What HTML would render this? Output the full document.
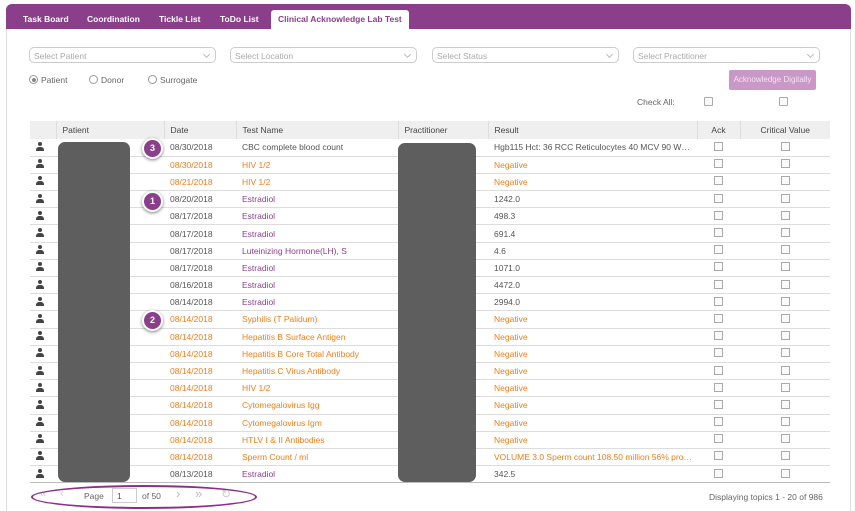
<!DOCTYPE html>
<html><head><meta charset="utf-8"><style>
*{box-sizing:border-box;margin:0;padding:0}
html,body{width:855px;height:511px;overflow:hidden}
body{background:#fff;font-family:"Liberation Sans",sans-serif;font-size:8.5px;color:#555;position:relative}
.panel{position:absolute;left:6px;top:4px;width:845px;height:507px;border:1px solid #ddd;border-bottom:none;border-radius:6px 6px 0 0}
.bar{position:absolute;left:6px;top:4px;width:845px;height:25px;background:#8b3f8a;border-radius:6px 6px 0 0}
.tab{position:absolute;top:14px;font-weight:bold;color:#fff;font-size:8.5px}
.tab.act{top:10px;height:19px;background:#fff;color:#8b3f8a;padding:4px 7px 0;border-radius:3px 3px 0 0}
.sel{position:absolute;top:47px;height:16px;border:1px solid #ccc;border-radius:5px;color:#aaa;padding:3px 4px;font-size:8.5px}
.sel:after{content:"";position:absolute;right:6px;top:4px;width:4px;height:4px;border-right:1px solid #bbb;border-bottom:1px solid #bbb;transform:rotate(45deg)}
.rad{position:absolute;top:75px;font-size:8.5px;color:#666}
.rad i{display:inline-block;width:9px;height:9px;border:1px solid #999;border-radius:50%;vertical-align:-1px;margin-right:3px;position:relative}
.rad i.on:after{content:"";position:absolute;left:1.5px;top:1.5px;width:4px;height:4px;border-radius:50%;background:#888}
.cb{position:absolute;width:9px;height:9px;border:1px solid #aaa;border-radius:1px;background:#fafafa}
table{position:absolute;left:30px;top:121px;width:800px;border-collapse:collapse;table-layout:fixed}
th{background:#efefef;font-weight:normal;text-align:left;height:18px;padding-left:6px;border-left:1px solid #ddd;color:#444}
th:first-child{border-left:none}
td{height:17.2px;padding-left:6px;border-bottom:1px solid #ddd;white-space:nowrap;overflow:hidden}
tr:last-child td{border-bottom:1px solid #bbb}
.o{color:#f07f1a}.p{color:#8b3f8a}
.c{text-align:center;padding-left:0}
.c span{display:inline-block;width:9px;height:9px;border:1px solid #aaa;background:#fafafa}
.u{display:inline-block;width:8px;height:9px;position:relative}
.u:before{content:"";position:absolute;left:2px;top:0;width:4px;height:4px;border-radius:50%;background:#444}
.u:after{content:"";position:absolute;left:0;top:5px;width:8px;height:4px;border-radius:3px 3px 0 0;background:#444}
.blob{position:absolute;background:#5e5e5e;border-radius:7px}
.badge{position:absolute;width:21px;height:21px;border-radius:50%;background:#8b3f8a;border:2px solid #fff;box-shadow:0 1px 3px rgba(0,0,0,.5);color:#fff;font-weight:bold;font-size:9px;text-align:center;line-height:17px}
.pg{position:absolute;top:491px;font-size:8.5px;color:#666}
</style></head><body>
<div class="panel"></div>
<div class="bar"></div>
<div class="tab" style="left:23px">Task Board</div>
<div class="tab" style="left:87px">Coordination</div>
<div class="tab" style="left:159px">Tickle List</div>
<div class="tab" style="left:220px">ToDo List</div>
<div class="tab act" style="left:271px">Clinical Acknowledge Lab Test</div>
<div class="sel" style="left:29px;width:187px">Select Patient</div>
<div class="sel" style="left:230px;width:187px">Select Location</div>
<div class="sel" style="left:432px;width:187px">Select Status</div>
<div class="sel" style="left:633px;width:187px">Select Practitioner</div>
<div class="rad" style="left:29px"><i class="on"></i>Patient</div>
<div class="rad" style="left:89px"><i></i>Donor</div>
<div class="rad" style="left:148px"><i></i>Surrogate</div>
<div style="position:absolute;left:729px;top:70px;width:87px;height:20px;background:#c998c7;border-radius:2px;color:#f3e3f2;font-size:8px;text-align:center;line-height:20px">Acknowledge Digitally</div>
<div style="position:absolute;left:637px;top:97px;color:#666">Check All:</div>
<div class="cb" style="left:704px;top:97px"></div>
<div class="cb" style="left:779px;top:97px"></div>
<table>
<colgroup><col style="width:26px"><col style="width:108px"><col style="width:72px"><col style="width:162px"><col style="width:90px"><col style="width:209px"><col style="width:43px"><col style="width:90px"></colgroup>
<tr><th></th><th>Patient</th><th>Date</th><th>Test Name</th><th>Practitioner</th><th>Result</th><th style="text-align:center;padding:0">Ack</th><th style="text-align:center;padding:0">Critical Value</th></tr>
<tr><td><i class="u"></i></td><td></td><td>08/30/2018</td><td>CBC complete blood count</td><td></td><td>Hgb115 Hct: 36 RCC Reticulocytes 40 MCV 90 W…</td><td class="c"><span></span></td><td class="c"><span></span></td></tr>
<tr class="o"><td><i class="u"></i></td><td></td><td>08/30/2018</td><td>HIV 1/2</td><td></td><td>Negative</td><td class="c"><span></span></td><td class="c"><span></span></td></tr>
<tr class="o"><td><i class="u"></i></td><td></td><td>08/21/2018</td><td>HIV 1/2</td><td></td><td>Negative</td><td class="c"><span></span></td><td class="c"><span></span></td></tr>
<tr><td><i class="u"></i></td><td></td><td>08/20/2018</td><td class="p">Estradiol</td><td></td><td>1242.0</td><td class="c"><span></span></td><td class="c"><span></span></td></tr>
<tr><td><i class="u"></i></td><td></td><td>08/17/2018</td><td class="p">Estradiol</td><td></td><td>498.3</td><td class="c"><span></span></td><td class="c"><span></span></td></tr>
<tr><td><i class="u"></i></td><td></td><td>08/17/2018</td><td class="p">Estradiol</td><td></td><td>691.4</td><td class="c"><span></span></td><td class="c"><span></span></td></tr>
<tr><td><i class="u"></i></td><td></td><td>08/17/2018</td><td class="p">Luteinizing Hormone(LH), S</td><td></td><td>4.6</td><td class="c"><span></span></td><td class="c"><span></span></td></tr>
<tr><td><i class="u"></i></td><td></td><td>08/17/2018</td><td class="p">Estradiol</td><td></td><td>1071.0</td><td class="c"><span></span></td><td class="c"><span></span></td></tr>
<tr><td><i class="u"></i></td><td></td><td>08/16/2018</td><td class="p">Estradiol</td><td></td><td>4472.0</td><td class="c"><span></span></td><td class="c"><span></span></td></tr>
<tr><td><i class="u"></i></td><td></td><td>08/14/2018</td><td class="p">Estradiol</td><td></td><td>2994.0</td><td class="c"><span></span></td><td class="c"><span></span></td></tr>
<tr class="o"><td><i class="u"></i></td><td></td><td>08/14/2018</td><td>Syphilis (T Palidum)</td><td></td><td>Negative</td><td class="c"><span></span></td><td class="c"><span></span></td></tr>
<tr class="o"><td><i class="u"></i></td><td></td><td>08/14/2018</td><td>Hepatitis B Surface Antigen</td><td></td><td>Negative</td><td class="c"><span></span></td><td class="c"><span></span></td></tr>
<tr class="o"><td><i class="u"></i></td><td></td><td>08/14/2018</td><td>Hepatitis B Core Total Antibody</td><td></td><td>Negative</td><td class="c"><span></span></td><td class="c"><span></span></td></tr>
<tr class="o"><td><i class="u"></i></td><td></td><td>08/14/2018</td><td>Hepatitis C Virus Antibody</td><td></td><td>Negative</td><td class="c"><span></span></td><td class="c"><span></span></td></tr>
<tr class="o"><td><i class="u"></i></td><td></td><td>08/14/2018</td><td>HIV 1/2</td><td></td><td>Negative</td><td class="c"><span></span></td><td class="c"><span></span></td></tr>
<tr class="o"><td><i class="u"></i></td><td></td><td>08/14/2018</td><td>Cytomegalovirus Igg</td><td></td><td>Negative</td><td class="c"><span></span></td><td class="c"><span></span></td></tr>
<tr class="o"><td><i class="u"></i></td><td></td><td>08/14/2018</td><td>Cytomegalovirus Igm</td><td></td><td>Negative</td><td class="c"><span></span></td><td class="c"><span></span></td></tr>
<tr class="o"><td><i class="u"></i></td><td></td><td>08/14/2018</td><td>HTLV I &amp; II Antibodies</td><td></td><td>Negative</td><td class="c"><span></span></td><td class="c"><span></span></td></tr>
<tr class="o"><td><i class="u"></i></td><td></td><td>08/14/2018</td><td>Sperm Count / ml</td><td></td><td>VOLUME 3.0 Sperm count 108.50 million 56% pro…</td><td class="c"><span></span></td><td class="c"><span></span></td></tr>
<tr><td><i class="u"></i></td><td></td><td>08/13/2018</td><td class="p">Estradiol</td><td></td><td>342.5</td><td class="c"><span></span></td><td class="c"><span></span></td></tr>
</table>
<div class="blob" style="left:58px;top:142px;width:72px;height:340px"></div>
<div class="blob" style="left:398px;top:143px;width:78px;height:339px"></div>
<div class="badge" style="left:142px;top:138px">3</div>
<div class="badge" style="left:142px;top:191px">1</div>
<div class="badge" style="left:142px;top:310px">2</div>
<div class="pg" style="left:40px;color:#ccc;font-size:11px;top:488px">«</div>
<div class="pg" style="left:60px;color:#ccc;font-size:11px;top:488px">‹</div>
<div class="pg" style="left:84px">Page</div>
<div style="position:absolute;left:112px;top:488px;width:25px;height:15px;border:1px solid #ccc;font-size:8.5px;padding:2px 4px;color:#555">1</div>
<div class="pg" style="left:142px">of 50</div>
<div class="pg" style="left:176px;color:#bbb;font-size:13px;top:486px">›</div>
<div class="pg" style="left:195px;color:#bbb;font-size:13px;top:486px">»</div>
<div class="pg" style="left:221px;color:#ccc;font-size:12px;top:487px">↻</div>
<div style="position:absolute;left:31px;top:485px;width:226px;height:24px;border:2.5px solid #8b2f8a;border-radius:50%"></div>
<div style="position:absolute;left:709px;top:492px;color:#666;font-size:8.5px">Displaying topics 1 - 20 of 986</div>
</body></html>
